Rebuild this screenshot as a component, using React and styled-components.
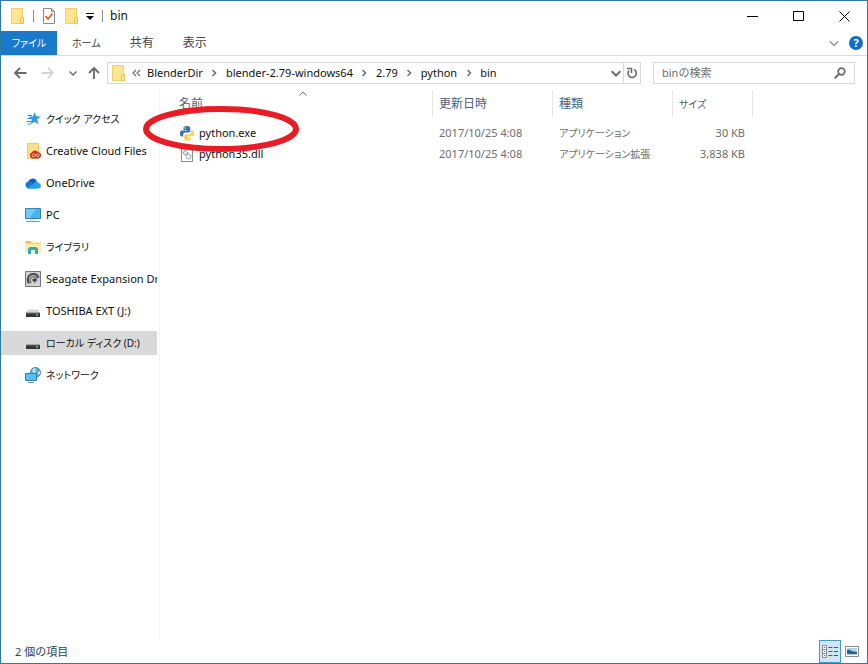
import React, { useState } from 'react';
import styled, { createGlobalStyle } from 'styled-components';

const places = [
  { name: 'クイック アクセス', icon: 'star', kana: true },
  { name: 'Creative Cloud Files', icon: 'creative' },
  { name: 'OneDrive', icon: 'cloud' },
  { name: 'PC', icon: 'pc' },
  { name: 'ライブラリ', icon: 'library', kana: true },
  { name: 'Seagate Expansion Drive', icon: 'seagate' },
  { name: 'TOSHIBA EXT (J:)', icon: 'drive' },
  { name: 'ローカル ディスク (D:)', icon: 'drive', kana: true },
  { name: 'ネットワーク', icon: 'network', kana: true },
];

const crumbs = ['BlenderDir', 'blender-2.79-windows64', '2.79', 'python', 'bin'];

const files = [
  { name: 'python.exe', icon: 'python', date: '2017/10/25 4:08', type: 'アプリケーション', size: '30 KB' },
  { name: 'python35.dll', icon: 'dll', date: '2017/10/25 4:08', type: 'アプリケーション拡張', size: '3,838 KB' },
];

const FolderIcon = () => (
  <svg width="16" height="18" viewBox="0 0 16 18" aria-hidden="true">
    <path d="M2.500 1.500h11v15h-11z" fill="#ffe491" stroke="#f0cf6c" />
    <path d="M12.500 10.500h2v6h-3v-5z" fill="#ffe491" stroke="#e5bd4d" />
  </svg>
);

const CheckPageIcon = () => (
  <svg width="14" height="18" viewBox="0 0 14 18" aria-hidden="true">
    <path d="M1.500 1.500h8l3 3v12h-11z" fill="#fff" stroke="#8a8a8a" />
    <path d="M9.500 1.500v3h3" fill="none" stroke="#8a8a8a" />
    <path d="M3.500 9l2.500 3L10.500 6.500" fill="none" stroke="#e0532a" strokeWidth="1.600" />
  </svg>
);

const Chevron = ({ dir = 'right', size = 8, color = '#6d6d6d', weight = 1.5 }) => {
  const paths = { right: 'M2.500 1L5.500 4L2.500 7', down: 'M0.500 2.500L4 6L7.500 2.500', up: 'M0.500 5.500L4 2L7.500 5.500' };
  return (
    <svg width={size} height={size} viewBox="0 0 8 8" aria-hidden="true">
      <path d={paths[dir]} fill="none" stroke={color} strokeWidth={weight} />
    </svg>
  );
};

const Arrow = ({ dir, color = '#6b6b6b' }) => {
  const paths = {
    left: 'M13.500 7H2M7 2L2 7l5 5',
    right: 'M0.500 7H12M7 2l5 5-5 5',
    up: 'M7 13V2M2 7l5-5 5 5',
  };
  return (
    <svg width="14" height="14" viewBox="0 0 14 14" aria-hidden="true">
      <path d={paths[dir]} fill="none" stroke={color} strokeWidth="1.800" />
    </svg>
  );
};

const PlaceIcon = ({ kind }) => (
  <svg width="16" height="16" viewBox="0 0 16 16" aria-hidden="true">
    {kind === 'star' && (
      <>
        <path d="M9.500 1l1.700 4.300 4.600.2-3.600 3 1.300 4.700-4-2.400-4 2.700 1.300-4.800-3.300-3 4.500-.3z" fill="#2c9be6" />
        <path d="M3 4.500h4M2.500 7.500h3M1.500 10.500h5M2.500 13h3" stroke="#2c86c9" strokeWidth="1" />
      </>
    )}
    {kind === 'creative' && (
      <>
        <path d="M2.500.5h11v15h-11z" fill="#ffe08a" stroke="#eec968" />
        <path d="M6.800 9.600a3.600 3.600 0 0 1 6.300-.3 3.100 3.100 0 0 1-.3 6.200H8.600a3.100 3.100 0 0 1-1.800-5.900z" fill="#da2718" />
        <path d="M13 13.800h-.6L9.600 11.300a1.500 1.500 0 1 0-.8 2.600c1.600-.2 1.800-2.900 3.500-2.900a1.400 1.400 0 0 1 .7 2.800z" fill="none" stroke="#ffd7b5" strokeWidth=".9" />
      </>
    )}
    {kind === 'cloud' && (
      <>
        <path d="M3 7.500a4.800 4.800 0 0 1 8.800-1.700L9 10z" fill="#0a63b5" />
        <path d="M3.500 13.500A3.600 3.600 0 0 1 3.200 6.500c1.500-.4 2.700.1 3.800.9l5 6.100z" fill="#1379d2" />
        <path d="M2.500 13.300L9 8.500c.6-2.800 4.200-2.700 4.700-.4 3 .7 3 5.400-.5 5.400H3.500z" fill="#28a1ea" />
      </>
    )}
    {kind === 'pc' && (
      <>
        <path d="M.5 1.500h15v10H.5z" fill="#43b4f5" stroke="#3780ad" />
        <path d="M1 2h10L5 11H1z" fill="#70cbfb" />
        <path d="M5 13h6" stroke="#c3d2db" />
        <path d="M1 14.500h14" stroke="#789bae" />
      </>
    )}
    {kind === 'library' && (
      <>
        <path d="M0 2h6l1 1.500h9V13H0z" fill="#f5d777" />
        <path d="M0 5h16v8H0z" fill="#ffeaa5" />
        <path d="M1.500 3h4" stroke="#a8a25a" />
        <path d="M3 15V9.500L5 8h6l2 1.500V15h-3v-4H6v4z" fill="#35a9b5" />
      </>
    )}
    {kind === 'seagate' && (
      <>
        <path d="M.5.500h15v15H.5z" fill="#d1d1d1" stroke="#777" />
        <path d="M4 12.500C1.500 9 3 3 8.500 3c3 0 4.500 1.500 5 4" fill="none" stroke="#4a4a4a" strokeWidth="2" />
        <path d="M6 12C4 9 5.500 5.500 9 5.500c1.500 0 2.500.7 3 2" fill="none" stroke="#777" strokeWidth="1.500" />
        <path d="M7 9c2-3 5-2 5.500 1L11 9.500 10 12z" fill="#454545" />
      </>
    )}
    {kind === 'drive' && (
      <>
        <path d="M3 6.500h10l2 3.500H1z" fill="#d6d6d6" />
        <path d="M1 10h14v4H1z" fill="#353535" />
        <path d="M1 10h14" stroke="#777" />
        <path d="M11 12h2" stroke="#4de071" strokeWidth="1.500" />
      </>
    )}
    {kind === 'network' && (
      <>
        <circle cx="10.500" cy="5.500" r="5" fill="#5aa9d4" stroke="#4689ac" />
        <path d="M7 3.500c1-2 3-2.500 4-2l-1 2 1.500 1.500-3 1zM13 5l2-1v3l-2 1z" fill="#c3e5f3" />
        <path d="M.5 6.500h11v7H.5z" fill="#54c0f8" stroke="#2683b8" />
        <path d="M3 15.500h6" stroke="#6193ad" />
      </>
    )}
  </svg>
);

const FileIcon = ({ kind }) => (
  <svg width="16" height="16" viewBox="0 0 16 16" aria-hidden="true">
    {kind === 'python' ? (
      <>
        <path d="M8 1C5 1 4.500 2 4.500 3.200V5H8v.6H3C1.500 5.600.8 7 .8 8.600c0 1.500.7 2.800 2 2.800h1.400V9.600C4.200 8.300 5.200 7.500 6.400 7.500h3c1 0 1.800-.8 1.800-1.800V3.200C11.200 1.700 10 1 8 1z" fill="#3874a5" />
        <path d="M8.500 15.500c2.800 0 3.300-1 3.300-2.200v-1.600H8.400v-.6H13c1.500 0 2.300-1.200 2.300-2.900 0-1.600-.8-2.800-2-2.800H12v1.800c0 1.200-.9 2-2 2H6.800c-1 0-1.700.8-1.700 1.700v2.500c0 1.500 1.400 2.100 3.400 2.100z" fill="#fbd64c" />
        <circle cx="6.300" cy="3" r=".7" fill="#fff" />
        <circle cx="10" cy="13.500" r=".7" fill="#fff" />
      </>
    ) : (
      <>
        <path d="M2.500.500h8l3 3v12h-11z" fill="#fff" stroke="#8c8c8c" />
        <circle cx="6.500" cy="6.500" r="2" fill="none" stroke="#7c99af" strokeDasharray="1.500 .7" strokeWidth="1.600" />
        <circle cx="9.500" cy="10.500" r="2.300" fill="none" stroke="#9aa7b1" strokeDasharray="1.500 .7" strokeWidth="1.600" />
      </>
    )}
  </svg>
);

const App = () => {
  const [selected, setSelected] = useState(7);
  const [query, setQuery] = useState('');
  const [details, setDetails] = useState(true);

  return (
    <>
      <GlobalStyle />
      <Window>
        <TitleBar>
          <QuickTools>
            <FolderIcon />
            <Divider />
            <ToolGroup>
              <IconButton aria-label="プロパティ" $w={14}><CheckPageIcon /></IconButton>
              <IconButton aria-label="新しいフォルダー" $w={16}><FolderIcon /></IconButton>
              <IconButton aria-label="クイック アクセス ツール バーのカスタマイズ" $w={8}>
                <svg width="8" height="8" viewBox="0 0 8 8"><path d="M0 1.500h8" stroke="#111" /><path d="M0 4h8L4 8z" fill="#111" /></svg>
              </IconButton>
            </ToolGroup>
            <Divider />
          </QuickTools>
          <Title>bin</Title>
          <WindowButton aria-label="最小化">
            <svg width="11" height="11"><path d="M0 5.500h11" stroke="#000" /></svg>
          </WindowButton>
          <WindowButton aria-label="最大化">
            <svg width="11" height="11"><path d="M.5.500h10v9h-10z" fill="none" stroke="#000" /></svg>
          </WindowButton>
          <WindowButton aria-label="閉じる">
            <svg width="11" height="11"><path d="M.5.500l10 10M10.500.500l-10 10" stroke="#000" /></svg>
          </WindowButton>
        </TitleBar>

        <Ribbon>
          <FileTab>ファイル</FileTab>
          <Tab $kana>ホーム</Tab>
          <Tab>共有</Tab>
          <Tab>表示</Tab>
          <RibbonEnd>
            <IconButton aria-label="リボンの展開" $w={10}><Chevron dir="down" size={10} color="#8e8e8e" weight={1} /></IconButton>
            <HelpButton aria-label="ヘルプ">?</HelpButton>
          </RibbonEnd>
        </Ribbon>

        <AddressRow>
          <NavButtons>
            <IconButton aria-label="戻る" $w={14}><Arrow dir="left" /></IconButton>
            <IconButton aria-label="進む" $w={14}><Arrow dir="right" color="#d6d6d6" /></IconButton>
            <IconButton aria-label="最近表示した場所" $w={8}><Chevron dir="down" /></IconButton>
            <IconButton aria-label="上へ" $w={14}><Arrow dir="up" /></IconButton>
          </NavButtons>
          <AddressBox>
            <FolderIcon />
            <Overflow>
              <svg width="9" height="8" viewBox="0 0 9 8"><path d="M4 1L1 4l3 3M8 1L5 4l3 3" fill="none" stroke="#6d6d6d" strokeWidth="1.200" /></svg>
            </Overflow>
            {crumbs.map((crumb, index) => (
              <React.Fragment key={crumb}>
                {index > 0 && <Separator><Chevron /></Separator>}
                <Crumb>{crumb}</Crumb>
              </React.Fragment>
            ))}
            <AddressEnd>
              <IconButton aria-label="以前の場所" $w={14}><Chevron dir="down" size={10} weight={1.6} /></IconButton>
              <RefreshButton aria-label="最新の情報に更新">
                <svg width="12" height="12" viewBox="0 0 12 12">
                  <path d="M8 2.500A4.200 4.200 0 1 1 3 3.500" fill="none" stroke="#6b6b6b" strokeWidth="1.600" />
                  <path d="M1 1.500h4.500V6" fill="none" stroke="#6b6b6b" strokeWidth="1.600" />
                </svg>
              </RefreshButton>
            </AddressEnd>
          </AddressBox>
          <SearchBox>
            <input
              type="text"
              aria-label="binの検索"
              placeholder="binの検索"
              value={query}
              onChange={(e) => setQuery(e.target.value)}
            />
            <svg width="12" height="12" viewBox="0 0 12 12" aria-hidden="true">
              <circle cx="7.500" cy="4.500" r="3.300" fill="none" stroke="#6b6b6b" strokeWidth="1.700" />
              <path d="M5 7L.8 11.200" stroke="#6b6b6b" strokeWidth="2" />
            </svg>
          </SearchBox>
        </AddressRow>

        <Body>
          <Sidebar>
            {places.map((place, index) => (
              <Place key={place.name} $selected={selected === index} $kana={place.kana} onClick={() => setSelected(index)}>
                <PlaceIcon kind={place.icon} />
                <span>{place.name}</span>
              </Place>
            ))}
          </Sidebar>

          <Main>
            <FileTable>
              <colgroup>
                <col width="273" />
                <col width="120" />
                <col width="120" />
                <col width="80" />
              </colgroup>
              <thead>
                <tr>
                  <th scope="col">名前<SortMark><Chevron dir="up" weight={1} /></SortMark></th>
                  <th scope="col">更新日時</th>
                  <th scope="col">種類</th>
                  <th scope="col"><Kana>サイズ</Kana></th>
                </tr>
              </thead>
              <tbody>
                {files.map((file) => (
                  <tr key={file.name}>
                    <td>
                      <FileName>
                        <FileIcon kind={file.icon} />
                        {file.name}
                      </FileName>
                    </td>
                    <td>{file.date}</td>
                    <td><Kana>{file.type}</Kana></td>
                    <td>{file.size}</td>
                  </tr>
                ))}
              </tbody>
            </FileTable>
            <Highlight viewBox="0 0 158 48" aria-hidden="true">
              <ellipse cx="79" cy="24" rx="75" ry="20" fill="none" stroke="#e81c24" strokeWidth="6" />
            </Highlight>
          </Main>
        </Body>

        <StatusBar>
          <Count>2 個の項目</Count>
          <ViewButton aria-label="詳細" $active={details} onClick={() => setDetails(true)}>
            <svg width="16" height="13" viewBox="0 0 16 13">
              <path d="M.5.500h4v12h-4zM.5 4.500h4M.5 8.500h4" fill="#fff" stroke="#8b8b8b" />
              <path d="M2 2.500h1M2 6.500h1M2 10.500h1" stroke="#2f6f93" />
              <path d="M6.500 2.500h4M6.500 6.500h4M6.500 10.500h4M12 2.500h4M12 6.500h4M12 10.500h4" stroke="#555" />
            </svg>
          </ViewButton>
          <ViewButton aria-label="大アイコン" $active={!details} onClick={() => setDetails(false)}>
            <svg width="14" height="11" viewBox="0 0 14 11">
              <path d="M.5.500h13v10H.5z" fill="#fff" stroke="#8b8b8b" />
              <path d="M2 2h10v7H2z" fill="#a9d5ee" />
              <path d="M2 4c3-1 4 2 10 2v2H2z" fill="#315f7c" />
            </svg>
          </ViewButton>
        </StatusBar>
      </Window>
    </>
  );
};

export default App;

const GlobalStyle = createGlobalStyle`
  * {
    box-sizing: border-box;
  }

  body {
    margin: 0;
    font-family: 'Noto Sans', 'Noto Sans CJK JP', sans-serif;
    font-size: 11px;
    line-height: 16px;
    color: #111;
  }

  button, input {
    font: inherit;
    color: inherit;
    border: 0;
    padding: 0;
    background: none;
  }

  svg {
    display: block;
    flex-shrink: 0;
  }
`;

const Window = styled.div`
  display: flex;
  flex-direction: column;
  min-height: 100vh;
  background: #fff;
  border: 1px solid #2f7ba5;
`;

const TitleBar = styled.header`
  display: flex;
  align-items: center;
  height: 30px;
  padding-left: 8px;
`;

const QuickTools = styled.div`
  display: flex;
  align-items: center;
  gap: 8px;
`;

const ToolGroup = styled.div`
  display: flex;
  align-items: center;
  gap: 7px;
`;

const Divider = styled.span`
  width: 1px;
  height: 12px;
  background: #8a8a8a;
`;

const IconButton = styled.button`
  display: flex;
  align-items: center;
  justify-content: center;
  width: ${(props) => props.$w}px;
  height: 20px;
`;

const Title = styled.h1`
  flex: 1;
  margin: 0;
  padding-left: 7px;
  font-size: 12px;
  font-weight: 400;
`;

const WindowButton = styled.button`
  display: flex;
  align-items: center;
  justify-content: center;
  width: 46px;
  height: 30px;
`;

const Ribbon = styled.nav`
  display: flex;
  gap: 1px;
  height: 25px;
  border-bottom: 1px solid #dadbdc;
`;

const Tab = styled.button`
  padding: 0 14px;
  font-size: ${(props) => (props.$kana ? '10px' : '12px')};
  font-feature-settings: 'palt';
  color: #444;
`;

const FileTab = styled(Tab)`
  width: 56px;
  padding: 0;
  font-size: 10px;
  color: #fff;
  background: #1979ca;
`;

const RibbonEnd = styled.div`
  display: flex;
  align-items: center;
  gap: 10px;
  margin-left: auto;
  padding-right: 4px;
`;

const HelpButton = styled.button`
  width: 14px;
  height: 14px;
  border-radius: 50%;
  font-weight: 700;
  line-height: 14px;
  color: #fff;
  background: #0f6fc6;
`;

const AddressRow = styled.div`
  display: flex;
  align-items: center;
  gap: 12px;
  height: 34px;
  padding: 0 12px;
`;

const NavButtons = styled.div`
  display: flex;
  align-items: center;
  gap: 14px;
  margin-right: -6px;

  button:nth-child(3) {
    margin-right: -4px;
  }
`;

const AddressBox = styled.div`
  display: flex;
  align-items: center;
  flex: 1;
  min-width: 0;
  height: 22px;
  padding-left: 2px;
  border: 1px solid #d9d9d9;
`;

const Overflow = styled.span`
  padding: 0 6px;
`;

const Crumb = styled.button`
  white-space: nowrap;
`;

const Separator = styled.span`
  display: flex;
  justify-content: center;
  width: 23px;
`;

const AddressEnd = styled.div`
  display: flex;
  align-items: center;
  height: 20px;
  margin-left: auto;
`;

const RefreshButton = styled.button`
  display: flex;
  align-items: center;
  justify-content: center;
  width: 17px;
  height: 20px;
  border-left: 1px solid #d9d9d9;
`;

const SearchBox = styled.div`
  display: flex;
  align-items: center;
  width: 202px;
  height: 22px;
  padding: 0 8px;
  border: 1px solid #d9d9d9;

  input {
    flex: 1;
    min-width: 0;
    outline: none;
  }

  input::placeholder {
    color: #6d6d6d;
    opacity: 1;
  }
`;

const Body = styled.div`
  display: flex;
  flex: 1;
`;

const Sidebar = styled.nav`
  display: flex;
  flex-direction: column;
  gap: 8px;
  width: 159px;
  flex-shrink: 0;
  padding: 17px 2px 0 0;
  border-right: 1px solid #f3f3f3;
`;

const Place = styled.button`
  display: flex;
  align-items: center;
  gap: 5px;
  height: 24px;
  padding-left: 24px;
  overflow: hidden;
  white-space: nowrap;
  font-size: ${(props) => (props.$kana ? '10px' : '11px')};
  font-feature-settings: 'palt';
  background: ${(props) => (props.$selected ? '#d9d9d9' : 'transparent')};
`;

const Main = styled.main`
  position: relative;
  flex: 1;
`;

const FileTable = styled.table`
  width: 593px;
  table-layout: fixed;
  border-spacing: 0;

  th {
    position: relative;
    height: 27px;
    padding: 0 6px;
    font-size: 12px;
    font-weight: 400;
    text-align: left;
    color: #4c607a;
    border-right: 1px solid #e5e5e5;
  }

  tbody::before {
    content: '';
    display: block;
    height: 5px;
  }

  td {
    height: 21px;
    padding: 0 6px;
    color: #6d6d6d;
    white-space: nowrap;
  }

  th:first-child,
  td:first-child {
    padding-left: 19px;
  }

  td:first-child {
    color: #111;
  }

  td:last-child {
    padding-right: 8px;
    text-align: right;
  }
`;

const Kana = styled.span`
  font-size: 10px;
  font-feature-settings: 'palt';
`;

const SortMark = styled.span`
  position: absolute;
  top: 0;
  left: 19px;
  right: 6px;
  display: flex;
  justify-content: center;
`;

const FileName = styled.span`
  display: flex;
  align-items: center;
  gap: 4px;
`;

const Highlight = styled.svg`
  position: absolute;
  top: 15px;
  left: -18px;
  width: 158px;
  height: 48px;
  pointer-events: none;
`;

const StatusBar = styled.footer`
  display: flex;
  align-items: center;
  height: 23px;
  padding: 0 4px 0 14px;
`;

const Count = styled.span`
  flex: 1;
  color: #2d3f5c;
`;

const ViewButton = styled.button`
  display: flex;
  align-items: center;
  justify-content: center;
  width: 22px;
  height: 23px;
  background: ${(props) => (props.$active ? '#cce8f6' : 'transparent')};
  border: 1px solid ${(props) => (props.$active ? '#3f9dc9' : 'transparent')};
`;
